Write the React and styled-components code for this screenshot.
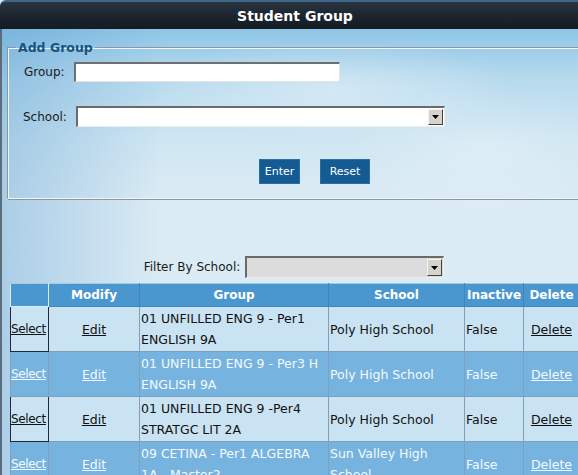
import React from "react";
import styled, { createGlobalStyle } from "styled-components";

const Global = createGlobalStyle`
  html, body { margin: 0; padding: 0; overflow: hidden; }
  body { width: 578px; height: 475px; background: #dcecf5; font-family: "DejaVu Sans", Verdana, sans-serif; }
`;

const Page = styled.div`
  width: 590px;
  height: 475px;
  overflow: hidden;
  display: flex;
  flex-direction: column;
`;

const TitleBar = styled.div`
  flex-shrink: 0;
  height: 27px;
  border-top: 2px solid #3d6587;
  border-radius: 6px 6px 0 0;
  background: linear-gradient(180deg, #2b3541 0%, #1c252f 50%, #141b23 100%);
  color: #ffffff;
  font: bold 14px "DejaVu Sans", Verdana, sans-serif;
  display: flex;
  align-items: center;
  justify-content: center;
`;

const Body = styled.div`
  flex: 1 0 auto;
  border-left: 2px solid #5b6d7c;
  background:
    radial-gradient(ellipse 260px 70px at 330px 60px, rgba(255,255,255,0.35), transparent 70%),
    radial-gradient(ellipse 200px 90px at 480px 120px, rgba(255,255,255,0.25), transparent 70%),
    linear-gradient(90deg, rgba(80,150,205,0.35) 0px, rgba(80,150,205,0) 160px),
    linear-gradient(180deg, #8fc5e6 0px, #b7daee 50px, #cfe6f2 110px, #dbebf4 170px, #ddedf5 100%);
  display: flex;
  flex-direction: column;
`;

const Fieldset = styled.fieldset`
  margin: 11px -20px 0 5px;
  padding: 0 0 14px 16px;
  border-style: solid;
  border-width: 1px;
  border-color: #8a97a3 #f2f6f9 #f2f6f9 #8a97a3;
  box-shadow: inset 1px 1px 0 #f2f6f9, 1px 1px 0 #8a97a3;
`;

const Legend = styled.legend`
  padding: 0 2px;
  margin-left: -8px;
  font: bold 12.5px/15px "DejaVu Sans", Verdana, sans-serif;
  color: #1a5281;
`;

const FormRow = styled.div`
  display: flex;
  align-items: center;
  gap: ${p => p.$gap}px;
  margin-top: ${p => p.$top}px;
  margin-left: ${p => p.$left || 0}px;
`;

const Label = styled.label`
  font: 12px "DejaVu Sans", Verdana, sans-serif;
  color: #1a1a1a;
`;

const TextInput = styled.div`
  width: ${p => p.$w}px;
  height: 20px;
  box-sizing: border-box;
  background: #fff;
  border-style: solid;
  border-width: 2px 1px 1px 2px;
  border-color: #6f6f6f #e4e4e4 #e4e4e4 #6f6f6f;
`;

const Dropdown = styled.div`
  width: ${p => p.$w}px;
  height: ${p => p.$h}px;
  box-sizing: border-box;
  background: ${p => p.$bg};
  border-style: solid;
  border-width: 2px 1px 1px 2px;
  border-color: #6a6a6a #ececec #ececec #6a6a6a;
  display: flex;
  justify-content: flex-end;
  align-items: stretch;
  padding: 1px;
`;

const ArrowBox = styled.div`
  width: 15px;
  box-sizing: border-box;
  background: #d6d3cc;
  border-style: solid;
  border-width: 1px;
  border-color: #f4f4f4 #404040 #404040 #f4f4f4;
  display: flex;
  align-items: center;
  justify-content: center;
`;

const Arrow = () => (
  <svg width="7" height="4" viewBox="0 0 7 4">
    <path d="M0 0H7L3.5 4Z" fill="#000" />
  </svg>
);

const ButtonRow = styled.div`
  display: flex;
  justify-content: center;
  gap: 20px;
  margin-top: 32px;
  padding-right: 4px;
`;

const Button = styled.button`
  width: ${p => p.$w}px;
  height: 25px;
  background: #155b93;
  border: 1px solid #2a6ea4;
  color: #fff;
  font: 11px "DejaVu Sans", Verdana, sans-serif;
  padding: 0;
  cursor: pointer;
`;

const FilterRow = styled.div`
  display: flex;
  align-items: center;
  justify-content: center;
  gap: 5px;
  margin-top: 57px;
  padding-right: 4px;
`;

const Table = styled.table`
  margin: 5px 0 0 8px;
  width: 569px;
  border-collapse: collapse;
  table-layout: fixed;
  font: 12.5px/21px "DejaVu Sans", Verdana, sans-serif;
`;

const Th = styled.th`
  height: 22px;
  background: #4a97cf;
  color: #fff;
  font-weight: bold;
  font-size: 12px;
  line-height: 22px;
  padding: 0;
  border: 1px solid ${p => (p.$first ? "#d6ecfa" : "#3f86bd")};
  border-top-color: #9ccbeb;
  text-align: center;
`;

const Tr = styled.tr`
  background: ${p => (p.$alt ? "#76b3de" : "#c9e3f3")};
  color: ${p => (p.$alt ? "#f4faff" : "#111")};
`;

const Td = styled.td`
  padding: 1px 1px;
  border: 1px solid ${p => (p.$dark ? "#1d2b38" : "#7fa0bc")};
  text-align: ${p => p.$align || "left"};
  vertical-align: middle;
  overflow: hidden;
`;

const SelectTd = styled(Td)`
  padding: 0;
  font-size: 12px;
  letter-spacing: -0.35px;
  white-space: nowrap;
  overflow: visible;
`;

const Link = styled.a`
  color: inherit;
  text-decoration: underline;
  cursor: pointer;
`;

const rows = [
  { group: "01 UNFILLED ENG 9 - Per1 ENGLISH 9A", school: "Poly High School", inactive: "False" },
  { group: "01 UNFILLED ENG 9 - Per3 H ENGLISH 9A", school: "Poly High School", inactive: "False" },
  { group: "01 UNFILLED ENG 9 -Per4 STRATGC LIT 2A", school: "Poly High School", inactive: "False" },
  { group: "09 CETINA - Per1 ALGEBRA 1A - Master2", school: "Sun Valley High School", inactive: "False" },
];

export default function App() {
  return (
    <>
      <Global />
      <Page>
        <TitleBar>Student Group</TitleBar>
        <Body>
          <Fieldset>
            <Legend>Add Group</Legend>
            <FormRow $gap={9} $top={7}>
              <Label>Group:</Label>
              <TextInput $w={266} />
            </FormRow>
            <FormRow $gap={9} $top={24} $left={-1}>
              <Label>School:</Label>
              <Dropdown $w={369} $h={21} $bg="#fff">
                <ArrowBox><Arrow /></ArrowBox>
              </Dropdown>
            </FormRow>
            <ButtonRow>
              <Button $w={41}>Enter</Button>
              <Button $w={50}>Reset</Button>
            </ButtonRow>
          </Fieldset>
          <FilterRow>
            <Label>Filter By School:</Label>
            <Dropdown $w={199} $h={22} $bg="#dcdcdc">
              <ArrowBox><Arrow /></ArrowBox>
            </Dropdown>
          </FilterRow>
          <Table>
            <colgroup>
              <col style={{ width: 38 }} />
              <col style={{ width: 91 }} />
              <col style={{ width: 189 }} />
              <col style={{ width: 136 }} />
              <col style={{ width: 59 }} />
              <col style={{ width: 56 }} />
            </colgroup>
            <thead>
              <tr>
                <Th $first></Th>
                <Th>Modify</Th>
                <Th>Group</Th>
                <Th>School</Th>
                <Th>Inactive</Th>
                <Th>Delete</Th>
              </tr>
            </thead>
            <tbody>
              {rows.map((r, i) => (
                <Tr key={i} $alt={i % 2 === 1}>
                  <SelectTd $dark={i % 2 === 0}><Link>Select</Link></SelectTd>
                  <Td $align="center"><Link>Edit</Link></Td>
                  <Td>{r.group}</Td>
                  <Td>{r.school}</Td>
                  <Td>{r.inactive}</Td>
                  <Td $align="center"><Link>Delete</Link></Td>
                </Tr>
              ))}
            </tbody>
          </Table>
        </Body>
      </Page>
    </>
  );
}
